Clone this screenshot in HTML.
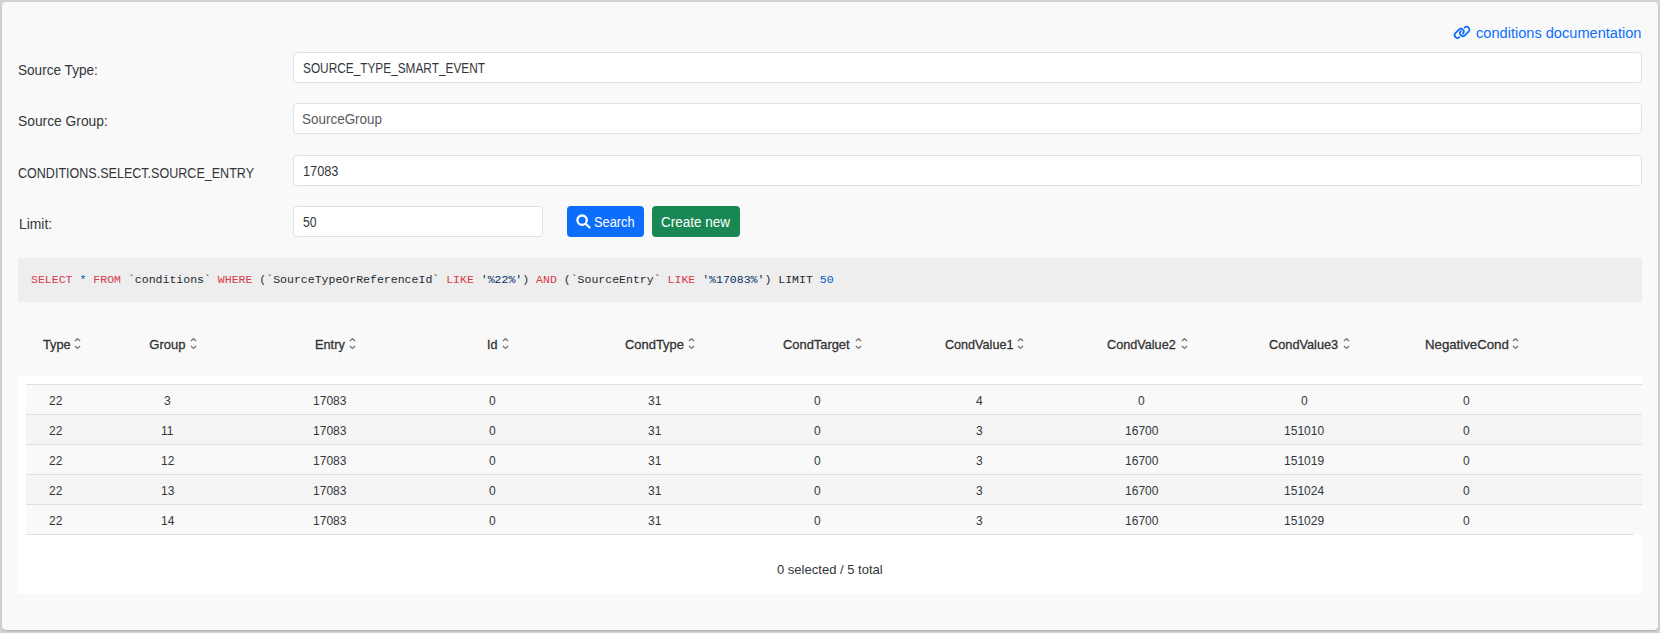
<!DOCTYPE html>
<html><head><meta charset="utf-8"><title>Conditions</title>
<style>
html,body{margin:0;padding:0;width:1660px;height:633px;overflow:hidden;background:#d3d3d3;}
.card{position:absolute;left:2px;top:2px;width:1656px;height:628px;background:#f9f9f9;border-radius:4px;box-shadow:0 1px 2px rgba(0,0,0,.12),0 2px 2px -1px rgba(0,0,0,.1);}
.t{position:absolute;white-space:nowrap;transform-origin:0 0;}
.inp{position:absolute;left:293px;width:1347px;height:29px;background:#fff;border:1px solid #dee2e6;border-radius:4px;}
.btn{position:absolute;top:206px;height:31px;border-radius:4px;}
.sql{position:absolute;left:18px;top:258px;width:1624px;height:44px;background:#eeeeee;}
.white{position:absolute;left:18px;top:376px;width:1624px;height:218px;background:#ffffff;}
.row{position:absolute;left:26px;width:1616px;height:29px;border-top:1px solid #dfdfdf;}
.lastline{position:absolute;left:26px;top:534px;width:1608px;height:1px;background:#dfdfdf;}
.ic{position:absolute;width:8px;height:12px;}
.ic svg{display:block}
</style></head><body>
<div class="card"></div>
<div class="inp" style="top:52px"></div>
<div class="inp" style="top:103px"></div>
<div class="inp" style="top:155px"></div>
<div class="inp" style="top:206px;width:248px"></div>
<div class="btn" style="left:567px;width:77px;background:#0d6efd"></div>
<div class="btn" style="left:652px;width:88px;background:#198754"></div>
<svg style="position:absolute;left:575px;top:213px" width="17" height="17" viewBox="0 0 17 17"><circle cx="7.1" cy="7.2" r="4.7" fill="none" stroke="#fff" stroke-width="2.3"/><path d="M10.6 10.7 L14.6 14.6" stroke="#fff" stroke-width="2.1" stroke-linecap="round"/></svg>
<svg style="position:absolute;left:1452px;top:25px" width="20" height="16" viewBox="0 0 20 16"><g fill="none" stroke="#0d6efd" stroke-width="1.75" stroke-linecap="round">
<path d="M7.46 12.10 A2.8 2.8 0 0 1 3.44 8.20 L6.84 4.70 A2.8 2.8 0 0 1 10.86 8.60"/>
<path d="M12.60 2.64 A2.8 2.8 0 0 1 16.50 6.66 L12.80 10.26 A2.8 2.8 0 0 1 8.90 6.24"/>
</g></svg>
<div class="sql"></div>
<div class="white"></div>
<div class="row" style="top:384px;background:#f9f9f9"></div>
<div class="row" style="top:414px;background:#f5f5f5"></div>
<div class="row" style="top:444px;background:#f9f9f9"></div>
<div class="row" style="top:474px;background:#f5f5f5"></div>
<div class="row" style="top:504px;background:#f9f9f9"></div>
<div class="lastline"></div>
<div class="ic" style="left:74.0px;top:338px"><svg width="8" height="12" viewBox="0 0 8 12"><path d="M0.9 3.0 L3.5 0.7 L6.1 3.0 M0.9 8.0 L3.5 10.4 L6.1 8.0" fill="none" stroke="#757575" stroke-width="1.3"/></svg></div>
<div class="ic" style="left:189.8px;top:338px"><svg width="8" height="12" viewBox="0 0 8 12"><path d="M0.9 3.0 L3.5 0.7 L6.1 3.0 M0.9 8.0 L3.5 10.4 L6.1 8.0" fill="none" stroke="#757575" stroke-width="1.3"/></svg></div>
<div class="ic" style="left:349.2px;top:338px"><svg width="8" height="12" viewBox="0 0 8 12"><path d="M0.9 3.0 L3.5 0.7 L6.1 3.0 M0.9 8.0 L3.5 10.4 L6.1 8.0" fill="none" stroke="#757575" stroke-width="1.3"/></svg></div>
<div class="ic" style="left:502.0px;top:338px"><svg width="8" height="12" viewBox="0 0 8 12"><path d="M0.9 3.0 L3.5 0.7 L6.1 3.0 M0.9 8.0 L3.5 10.4 L6.1 8.0" fill="none" stroke="#757575" stroke-width="1.3"/></svg></div>
<div class="ic" style="left:687.8px;top:338px"><svg width="8" height="12" viewBox="0 0 8 12"><path d="M0.9 3.0 L3.5 0.7 L6.1 3.0 M0.9 8.0 L3.5 10.4 L6.1 8.0" fill="none" stroke="#757575" stroke-width="1.3"/></svg></div>
<div class="ic" style="left:854.6px;top:338px"><svg width="8" height="12" viewBox="0 0 8 12"><path d="M0.9 3.0 L3.5 0.7 L6.1 3.0 M0.9 8.0 L3.5 10.4 L6.1 8.0" fill="none" stroke="#757575" stroke-width="1.3"/></svg></div>
<div class="ic" style="left:1017.3px;top:338px"><svg width="8" height="12" viewBox="0 0 8 12"><path d="M0.9 3.0 L3.5 0.7 L6.1 3.0 M0.9 8.0 L3.5 10.4 L6.1 8.0" fill="none" stroke="#757575" stroke-width="1.3"/></svg></div>
<div class="ic" style="left:1180.8px;top:338px"><svg width="8" height="12" viewBox="0 0 8 12"><path d="M0.9 3.0 L3.5 0.7 L6.1 3.0 M0.9 8.0 L3.5 10.4 L6.1 8.0" fill="none" stroke="#757575" stroke-width="1.3"/></svg></div>
<div class="ic" style="left:1343.1px;top:338px"><svg width="8" height="12" viewBox="0 0 8 12"><path d="M0.9 3.0 L3.5 0.7 L6.1 3.0 M0.9 8.0 L3.5 10.4 L6.1 8.0" fill="none" stroke="#757575" stroke-width="1.3"/></svg></div>
<div class="ic" style="left:1511.8px;top:338px"><svg width="8" height="12" viewBox="0 0 8 12"><path d="M0.9 3.0 L3.5 0.7 L6.1 3.0 M0.9 8.0 L3.5 10.4 L6.1 8.0" fill="none" stroke="#757575" stroke-width="1.3"/></svg></div>
<div class="t" style="left:18.30px;top:63.05px;font:normal 14px/14px 'Liberation Sans', sans-serif;color:#33373b;transform:scaleX(0.9707);">Source Type:</div>
<div class="t" style="left:18.30px;top:113.75px;font:normal 14px/14px 'Liberation Sans', sans-serif;color:#33373b;transform:scaleX(0.9857);">Source Group:</div>
<div class="t" style="left:18.10px;top:166.35px;font:normal 14px/14px 'Liberation Sans', sans-serif;color:#33373b;transform:scaleX(0.8958);">CONDITIONS.SELECT.SOURCE_ENTRY</div>
<div class="t" style="left:18.80px;top:217.05px;font:normal 14px/14px 'Liberation Sans', sans-serif;color:#33373b;transform:scaleX(0.9909);">Limit:</div>
<div class="t" style="left:302.50px;top:60.85px;font:normal 14px/14px 'Liberation Sans', sans-serif;color:#33373b;transform:scaleX(0.8454);">SOURCE_TYPE_SMART_EVENT</div>
<div class="t" style="left:302.30px;top:112.05px;font:normal 14px/14px 'Liberation Sans', sans-serif;color:#595c5f;transform:scaleX(0.9614);">SourceGroup</div>
<div class="t" style="left:302.70px;top:163.95px;font:normal 14px/14px 'Liberation Sans', sans-serif;color:#33373b;transform:scaleX(0.9103);">17083</div>
<div class="t" style="left:302.50px;top:215.05px;font:normal 14px/14px 'Liberation Sans', sans-serif;color:#33373b;transform:scaleX(0.8750);">50</div>
<div class="t" style="left:1475.70px;top:25.95px;font:normal 14px/14px 'Liberation Sans', sans-serif;color:#0d6efd;transform:scaleX(1.0421);">conditions documentation</div>
<div class="t" style="left:593.80px;top:215.15px;font:normal 14px/14px 'Liberation Sans', sans-serif;color:#ffffff;transform:scaleX(0.9136);">Search</div>
<div class="t" style="left:661.30px;top:215.15px;font:normal 14px/14px 'Liberation Sans', sans-serif;color:#ffffff;transform:scaleX(0.9639);">Create new</div>
<div class="t" style="left:30.70px;top:273.98px;font:normal 11.6px/11.6px 'Liberation Mono', monospace;color:#24292e;transform:scaleX(0.9943);"><span style="color:#d73a49">SELECT</span> <span style="color:#005cc5">*</span> <span style="color:#d73a49">FROM</span> `conditions` <span style="color:#d73a49">WHERE</span> (`SourceTypeOrReferenceId` <span style="color:#d73a49">LIKE</span> <span style="color:#032f62">'%22%'</span>) <span style="color:#d73a49">AND</span> (`SourceEntry` <span style="color:#d73a49">LIKE</span> <span style="color:#032f62">'%17083%'</span>) LIMIT <span style="color:#005cc5">50</span></div>
<div class="t" style="left:42.90px;top:338.00px;font:normal 13px/13px 'Liberation Sans', sans-serif;color:#333333;transform:scaleX(0.9821);-webkit-text-stroke:0.3px #333333;">Type</div>
<div class="t" style="left:149.30px;top:338.00px;font:normal 13px/13px 'Liberation Sans', sans-serif;color:#333333;transform:scaleX(1.0000);-webkit-text-stroke:0.3px #333333;">Group</div>
<div class="t" style="left:314.60px;top:338.00px;font:normal 13px/13px 'Liberation Sans', sans-serif;color:#333333;transform:scaleX(0.9806);-webkit-text-stroke:0.3px #333333;">Entry</div>
<div class="t" style="left:486.90px;top:338.00px;font:normal 13px/13px 'Liberation Sans', sans-serif;color:#333333;transform:scaleX(0.9636);-webkit-text-stroke:0.3px #333333;">Id</div>
<div class="t" style="left:624.90px;top:338.00px;font:normal 13px/13px 'Liberation Sans', sans-serif;color:#333333;transform:scaleX(0.9949);-webkit-text-stroke:0.3px #333333;">CondType</div>
<div class="t" style="left:783.00px;top:338.00px;font:normal 13px/13px 'Liberation Sans', sans-serif;color:#333333;transform:scaleX(0.9912);-webkit-text-stroke:0.3px #333333;">CondTarget</div>
<div class="t" style="left:945.00px;top:338.00px;font:normal 13px/13px 'Liberation Sans', sans-serif;color:#333333;transform:scaleX(0.9690);-webkit-text-stroke:0.3px #333333;">CondValue1</div>
<div class="t" style="left:1106.50px;top:338.00px;font:normal 13px/13px 'Liberation Sans', sans-serif;color:#333333;transform:scaleX(0.9732);-webkit-text-stroke:0.3px #333333;">CondValue2</div>
<div class="t" style="left:1268.90px;top:338.00px;font:normal 13px/13px 'Liberation Sans', sans-serif;color:#333333;transform:scaleX(0.9803);-webkit-text-stroke:0.3px #333333;">CondValue3</div>
<div class="t" style="left:1424.60px;top:338.00px;font:normal 13px/13px 'Liberation Sans', sans-serif;color:#333333;transform:scaleX(1.0171);-webkit-text-stroke:0.3px #333333;">NegativeCond</div>
<div class="t" style="left:49.42px;top:393.90px;font:normal 13px/13px 'Liberation Sans', sans-serif;color:#33373b;transform:scaleX(0.9250);">22</div>
<div class="t" style="left:163.96px;top:393.90px;font:normal 13px/13px 'Liberation Sans', sans-serif;color:#33373b;transform:scaleX(0.9250);">3</div>
<div class="t" style="left:312.95px;top:393.90px;font:normal 13px/13px 'Liberation Sans', sans-serif;color:#33373b;transform:scaleX(0.9250);">17083</div>
<div class="t" style="left:488.75px;top:393.90px;font:normal 13px/13px 'Liberation Sans', sans-serif;color:#33373b;transform:scaleX(0.9250);">0</div>
<div class="t" style="left:647.90px;top:393.90px;font:normal 13px/13px 'Liberation Sans', sans-serif;color:#33373b;transform:scaleX(0.9250);">31</div>
<div class="t" style="left:813.53px;top:393.90px;font:normal 13px/13px 'Liberation Sans', sans-serif;color:#33373b;transform:scaleX(0.9250);">0</div>
<div class="t" style="left:975.92px;top:393.90px;font:normal 13px/13px 'Liberation Sans', sans-serif;color:#33373b;transform:scaleX(0.9250);">4</div>
<div class="t" style="left:1138.31px;top:393.90px;font:normal 13px/13px 'Liberation Sans', sans-serif;color:#33373b;transform:scaleX(0.9250);">0</div>
<div class="t" style="left:1300.70px;top:393.90px;font:normal 13px/13px 'Liberation Sans', sans-serif;color:#33373b;transform:scaleX(0.9250);">0</div>
<div class="t" style="left:1463.09px;top:393.90px;font:normal 13px/13px 'Liberation Sans', sans-serif;color:#33373b;transform:scaleX(0.9250);">0</div>
<div class="t" style="left:49.42px;top:423.90px;font:normal 13px/13px 'Liberation Sans', sans-serif;color:#33373b;transform:scaleX(0.9250);">22</div>
<div class="t" style="left:160.72px;top:423.90px;font:normal 13px/13px 'Liberation Sans', sans-serif;color:#33373b;transform:scaleX(0.9250);">11</div>
<div class="t" style="left:312.95px;top:423.90px;font:normal 13px/13px 'Liberation Sans', sans-serif;color:#33373b;transform:scaleX(0.9250);">17083</div>
<div class="t" style="left:488.75px;top:423.90px;font:normal 13px/13px 'Liberation Sans', sans-serif;color:#33373b;transform:scaleX(0.9250);">0</div>
<div class="t" style="left:647.90px;top:423.90px;font:normal 13px/13px 'Liberation Sans', sans-serif;color:#33373b;transform:scaleX(0.9250);">31</div>
<div class="t" style="left:813.53px;top:423.90px;font:normal 13px/13px 'Liberation Sans', sans-serif;color:#33373b;transform:scaleX(0.9250);">0</div>
<div class="t" style="left:975.92px;top:423.90px;font:normal 13px/13px 'Liberation Sans', sans-serif;color:#33373b;transform:scaleX(0.9250);">3</div>
<div class="t" style="left:1124.90px;top:423.90px;font:normal 13px/13px 'Liberation Sans', sans-serif;color:#33373b;transform:scaleX(0.9250);">16700</div>
<div class="t" style="left:1284.05px;top:423.90px;font:normal 13px/13px 'Liberation Sans', sans-serif;color:#33373b;transform:scaleX(0.9250);">151010</div>
<div class="t" style="left:1463.09px;top:423.90px;font:normal 13px/13px 'Liberation Sans', sans-serif;color:#33373b;transform:scaleX(0.9250);">0</div>
<div class="t" style="left:49.42px;top:453.90px;font:normal 13px/13px 'Liberation Sans', sans-serif;color:#33373b;transform:scaleX(0.9250);">22</div>
<div class="t" style="left:160.72px;top:453.90px;font:normal 13px/13px 'Liberation Sans', sans-serif;color:#33373b;transform:scaleX(0.9250);">12</div>
<div class="t" style="left:312.95px;top:453.90px;font:normal 13px/13px 'Liberation Sans', sans-serif;color:#33373b;transform:scaleX(0.9250);">17083</div>
<div class="t" style="left:488.75px;top:453.90px;font:normal 13px/13px 'Liberation Sans', sans-serif;color:#33373b;transform:scaleX(0.9250);">0</div>
<div class="t" style="left:647.90px;top:453.90px;font:normal 13px/13px 'Liberation Sans', sans-serif;color:#33373b;transform:scaleX(0.9250);">31</div>
<div class="t" style="left:813.53px;top:453.90px;font:normal 13px/13px 'Liberation Sans', sans-serif;color:#33373b;transform:scaleX(0.9250);">0</div>
<div class="t" style="left:975.92px;top:453.90px;font:normal 13px/13px 'Liberation Sans', sans-serif;color:#33373b;transform:scaleX(0.9250);">3</div>
<div class="t" style="left:1124.90px;top:453.90px;font:normal 13px/13px 'Liberation Sans', sans-serif;color:#33373b;transform:scaleX(0.9250);">16700</div>
<div class="t" style="left:1284.05px;top:453.90px;font:normal 13px/13px 'Liberation Sans', sans-serif;color:#33373b;transform:scaleX(0.9250);">151019</div>
<div class="t" style="left:1463.09px;top:453.90px;font:normal 13px/13px 'Liberation Sans', sans-serif;color:#33373b;transform:scaleX(0.9250);">0</div>
<div class="t" style="left:49.42px;top:483.90px;font:normal 13px/13px 'Liberation Sans', sans-serif;color:#33373b;transform:scaleX(0.9250);">22</div>
<div class="t" style="left:160.72px;top:483.90px;font:normal 13px/13px 'Liberation Sans', sans-serif;color:#33373b;transform:scaleX(0.9250);">13</div>
<div class="t" style="left:312.95px;top:483.90px;font:normal 13px/13px 'Liberation Sans', sans-serif;color:#33373b;transform:scaleX(0.9250);">17083</div>
<div class="t" style="left:488.75px;top:483.90px;font:normal 13px/13px 'Liberation Sans', sans-serif;color:#33373b;transform:scaleX(0.9250);">0</div>
<div class="t" style="left:647.90px;top:483.90px;font:normal 13px/13px 'Liberation Sans', sans-serif;color:#33373b;transform:scaleX(0.9250);">31</div>
<div class="t" style="left:813.53px;top:483.90px;font:normal 13px/13px 'Liberation Sans', sans-serif;color:#33373b;transform:scaleX(0.9250);">0</div>
<div class="t" style="left:975.92px;top:483.90px;font:normal 13px/13px 'Liberation Sans', sans-serif;color:#33373b;transform:scaleX(0.9250);">3</div>
<div class="t" style="left:1124.90px;top:483.90px;font:normal 13px/13px 'Liberation Sans', sans-serif;color:#33373b;transform:scaleX(0.9250);">16700</div>
<div class="t" style="left:1284.05px;top:483.90px;font:normal 13px/13px 'Liberation Sans', sans-serif;color:#33373b;transform:scaleX(0.9250);">151024</div>
<div class="t" style="left:1463.09px;top:483.90px;font:normal 13px/13px 'Liberation Sans', sans-serif;color:#33373b;transform:scaleX(0.9250);">0</div>
<div class="t" style="left:49.42px;top:513.90px;font:normal 13px/13px 'Liberation Sans', sans-serif;color:#33373b;transform:scaleX(0.9250);">22</div>
<div class="t" style="left:160.72px;top:513.90px;font:normal 13px/13px 'Liberation Sans', sans-serif;color:#33373b;transform:scaleX(0.9250);">14</div>
<div class="t" style="left:312.95px;top:513.90px;font:normal 13px/13px 'Liberation Sans', sans-serif;color:#33373b;transform:scaleX(0.9250);">17083</div>
<div class="t" style="left:488.75px;top:513.90px;font:normal 13px/13px 'Liberation Sans', sans-serif;color:#33373b;transform:scaleX(0.9250);">0</div>
<div class="t" style="left:647.90px;top:513.90px;font:normal 13px/13px 'Liberation Sans', sans-serif;color:#33373b;transform:scaleX(0.9250);">31</div>
<div class="t" style="left:813.53px;top:513.90px;font:normal 13px/13px 'Liberation Sans', sans-serif;color:#33373b;transform:scaleX(0.9250);">0</div>
<div class="t" style="left:975.92px;top:513.90px;font:normal 13px/13px 'Liberation Sans', sans-serif;color:#33373b;transform:scaleX(0.9250);">3</div>
<div class="t" style="left:1124.90px;top:513.90px;font:normal 13px/13px 'Liberation Sans', sans-serif;color:#33373b;transform:scaleX(0.9250);">16700</div>
<div class="t" style="left:1284.05px;top:513.90px;font:normal 13px/13px 'Liberation Sans', sans-serif;color:#33373b;transform:scaleX(0.9250);">151029</div>
<div class="t" style="left:1463.09px;top:513.90px;font:normal 13px/13px 'Liberation Sans', sans-serif;color:#33373b;transform:scaleX(0.9250);">0</div>
<div class="t" style="left:776.90px;top:563.00px;font:normal 13px/13px 'Liberation Sans', sans-serif;color:#33373b;transform:scaleX(1.0019);">0 selected / 5 total</div>
</body></html>
